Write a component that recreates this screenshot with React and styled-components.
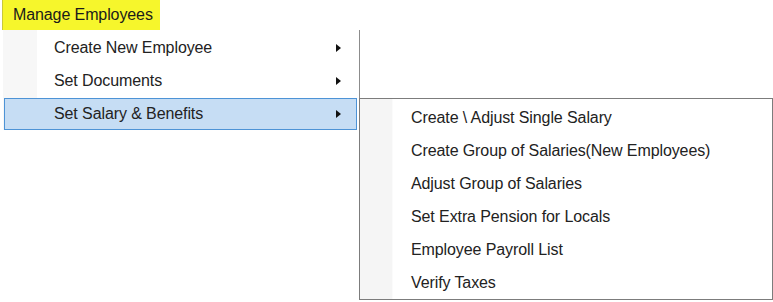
import React from "react";
import styled, { createGlobalStyle } from "styled-components";

const GlobalStyle = createGlobalStyle`
    body {
        margin: 0;
        background: #ffffff;
        font-family: "Liberation Sans", Arial, sans-serif;
    }
`;

const mainItems = [
    { label: "Create New Employee" },
    { label: "Set Documents" },
    { label: "Set Salary & Benefits", active: true },
];

const subItems = [
    "Create \\ Adjust Single Salary",
    "Create Group of Salaries(New Employees)",
    "Adjust Group of Salaries",
    "Set Extra Pension for Locals",
    "Employee Payroll List",
    "Verify Taxes",
];

function Arrow() {
    return (
        <svg width="5" height="8" viewBox="0 0 5 8">
            <path d="M0 0 L5 4 L0 8 Z" fill="#111" />
        </svg>
    );
}

export default function App() {
    return (
        <Page>
            <GlobalStyle />
            <Header>Manage Employees</Header>
            <Menu>
                {mainItems.map((item) => (
                    <MenuItem key={item.label} active={item.active ? 1 : 0}>
                        <span>{item.label}</span>
                        <Arrow />
                        {item.active && (
                            <SubMenu>
                                {subItems.map((s) => (
                                    <SubItem key={s}>{s}</SubItem>
                                ))}
                            </SubMenu>
                        )}
                    </MenuItem>
                ))}
            </Menu>
        </Page>
    );
}

const Page = styled.div`
    width: 773px;
    height: 302px;
    position: relative;
    color: #222222;
    font-size: 16px;
    letter-spacing: -0.1px;
`;

const Header = styled.div`
    display: flex;
    align-items: center;
    margin-left: 2px;
    width: 158px;
    height: 30px;
    padding-left: 10px;
    box-sizing: border-box;
    background: #f6f62c;
    border-left: 1px solid #c9c93a;
    color: #1a1a1a;
    white-space: nowrap;
`;

const Menu = styled.div`
    margin-left: 3px;
    width: 357px;
    padding: 1px 0 0 1px;
    box-sizing: border-box;
    border-right: 1px solid #8c8c8c;
    background: linear-gradient(to right, #f7f7f7 0 34px, #ffffff 34px);
`;

const MenuItem = styled.div`
    position: relative;
    display: flex;
    align-items: center;
    justify-content: space-between;
    height: ${(p) => (p.active ? "32px" : "33px")};
    width: 353px;
    padding: 0 15px 0 49px;
    box-sizing: border-box;
    background: ${(p) => (p.active ? "#c6ddf4" : "transparent")};
    border: 1px solid ${(p) => (p.active ? "#4d93d6" : "transparent")};
    margin-top: ${(p) => (p.active ? "1px" : "0")};
    svg {
        display: block;
    }
`;

const SubMenu = styled.div`
    position: absolute;
    top: -1px;
    left: 354px;
    width: 414px;
    height: 202px;
    box-sizing: border-box;
    padding-top: 2px;
    border: 1px solid #7c7c7c;
    background: linear-gradient(to right, #f5f5f5 0 32px, #fbfbfb 32px 33px, #ffffff 33px);
`;

const SubItem = styled.div`
    display: flex;
    align-items: center;
    height: 33px;
    padding-left: 51px;
    white-space: nowrap;
`;
